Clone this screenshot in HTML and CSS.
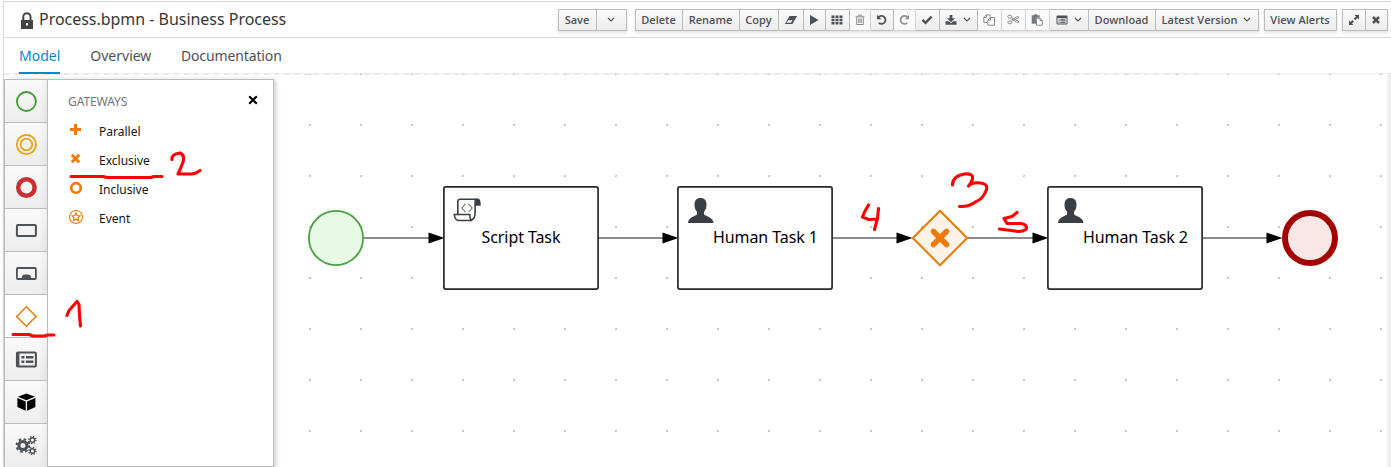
FILE: index.html
```
<!DOCTYPE html>
<html lang="en">
<head>
<meta charset="utf-8">
<title>Process.bpmn - Business Process</title>
<link rel="stylesheet" href="styles.css">
</head>
<body>
<div class="app">
  <header class="titlebar">
    <svg class="lock" width="14" height="18" viewBox="0 0 14 18"><path d="M3.300 8V4.800a3.600 3.600 0 0 1 7.200 0V8" fill="none" stroke="#444" stroke-width="2"/><path fill="#444" fill-rule="evenodd" d="M1 8h12v9H1zM6 11v2.500h2V11z"/></svg>
    <h1 class="title">Process.bpmn - Business Process</h1>
    <div class="toolbar">
      <div class="group">
        <button class="btn w-save">Save</button>
        <button class="btn w-caret"><svg width="8" height="6" viewBox="0 0 8 6"><path class="chev" d="M1 1l3 3 3-3"/></svg></button>
      </div>
      <div class="group main">
        <button class="btn w-delete">Delete</button>
        <button class="btn w-rename">Rename</button>
        <button class="btn w-copy">Copy</button>
        <button class="btn w25"><svg width="14" height="10" viewBox="0 0 14 10"><path fill="#4d5258" fill-rule="evenodd" d="M5.500 1h7.600L8.500 9H.9zM2.500 7.800H7L8.500 5.200H4.200z"/></svg></button>
        <button class="btn w22"><svg width="10" height="10" viewBox="0 0 10 10"><path fill="#4d5258" d="M1 0l8.500 5L1 10z"/></svg></button>
        <button class="btn w24"><svg width="12" height="10" viewBox="0 0 12 10"><path fill="#4d5258" d="M.5 .5h3v2.500h-3zM4.500 .5h3v2.500h-3zM8.500 .5h3v2.500h-3zM.5 3.800h3v2.400h-3zM4.500 3.800h3v2.400h-3zM8.500 3.800h3v2.400h-3zM.5 7h3v2.500h-3zM4.500 7h3v2.500h-3zM8.500 7h3v2.500h-3z"/></svg></button>
        <button class="btn w21 off"><svg width="10" height="12" viewBox="0 0 10 12"><path fill="none" stroke="#8b8d8f" d="M.7 2.800h8.600M3.300 2.500V1.200h3.400v1.300M1.700 3v7.500h6.600V3M3.700 4.500v4.500M5 4.500v4.500M6.300 4.500v4.500"/></svg></button>
        <button class="btn w23"><svg width="12" height="12" viewBox="0 0 12 12"><path fill="none" stroke="#4d5258" stroke-width="1.800" d="M2.200 3.600A4 4 0 1 1 2.800 8.900"/><path fill="#4d5258" d="M1 .8v4.400h4.400z"/></svg></button>
        <button class="btn w22 off"><svg width="12" height="12" viewBox="0 0 12 12"><path fill="none" stroke="#909294" stroke-width="1.800" d="M9.800 3.600A4 4 0 1 0 9.200 8.900"/><path fill="#909294" d="M11 .8v4.400H6.600z"/></svg></button>
        <button class="btn w24"><svg width="12" height="10" viewBox="0 0 12 10"><path fill="none" stroke="#4d5258" stroke-width="2.400" d="M1.500 4.800l3 3L10.600 1.700"/></svg></button>
        <button class="btn w38"><svg width="12" height="12" viewBox="0 0 12 12"><path fill="#4d5258" fill-rule="evenodd" d="M4.600 1h2.800v3.300H10L6 8.300l-4-4h2.600zM.5 7.300h3.300L6 9.300l2.200-2h3.300v3.500H.5z"/></svg><svg width="8" height="6" viewBox="0 0 8 6"><path class="chev" d="M1 1l3 3 3-3"/></svg></button>
        <button class="btn w24 off"><svg width="12" height="12" viewBox="0 0 12 12"><path fill="none" stroke="#8b8d8f" d="M3.500 .8H7v3M3.500.8L.8 3.500V8.500h4M3.500.8v2.700H.8M7.500 3.500h4v7.700H4.800V6.200zM7.500 3.500v2.700H4.800"/></svg></button>
        <button class="btn w24 off"><svg width="13" height="11" viewBox="0 0 13 11"><g fill="none" stroke="#8b8d8f"><ellipse cx="2.800" cy="2.700" rx="2" ry="1.500"/><ellipse cx="2.800" cy="8.300" rx="2" ry="1.500"/><path d="M4.500 3.500l7.500 4.200-1.500.8L4.500 5M4.500 7.500L12 3.300l-1.500-.8-6 3.500"/></g></svg></button>
        <button class="btn w24 off"><svg width="12" height="12" viewBox="0 0 12 12"><path fill="#777b7f" d="M.7 1.200h2.500V.3h3v.9h2.500v2.500H5v6H.7z"/><path fill="#fff" stroke="#888b8e" d="M5.500 4.200H9l2.300 2.300v4.700H5.500zM9 4.200v2.500h2.300"/></svg></button>
        <button class="btn w39"><svg width="12" height="10" viewBox="0 0 12 10"><path fill="#4d5258" fill-rule="evenodd" d="M1.500.5h9a1 1 0 0 1 1 1v7a1 1 0 0 1-1 1h-9a1 1 0 0 1-1-1v-7a1 1 0 0 1 1-1zM1.500 3v5.500h9V3z"/><path stroke="#4d5258" d="M2.500 4.200h1M4.300 4.200h5.200M2.500 5.800h1M4.300 5.800h5.200M2.500 7.400h1M4.300 7.400h5.200"/></svg><svg width="8" height="6" viewBox="0 0 8 6"><path class="chev" d="M1 1l3 3 3-3"/></svg></button>
        <button class="btn w-download">Download</button>
        <button class="btn w-latest">Latest Version<svg width="8" height="6" viewBox="0 0 8 6"><path class="chev" d="M1 1l3 3 3-3"/></svg></button>
      </div>
      <div class="group"><button class="btn w-alerts">View Alerts</button></div>
      <div class="group">
        <button class="btn w23"><svg width="10" height="10" viewBox="0 0 10 10"><path fill="#4d5258" d="M5.500 0H10v4.500L8.500 3 6.300 5.200 4.800 3.700 7 1.500zM0 5.500V10h4.500L3 8.500l2-2L3.500 5l-2 2z"/></svg></button>
        <button class="btn w22"><svg width="8" height="8" viewBox="0 0 8 8"><path stroke="#4d5258" stroke-width="2.500" d="M1 1l6 6M7 1L1 7"/></svg></button>
      </div>
    </div>
  </header>
  <nav class="tabs">
    <a class="tab active">Model</a><a class="tab overview">Overview</a><a class="tab docs">Documentation</a>
  </nav>
  <main class="workspace">
    <aside class="palette">
      <div class="rail">
        <div class="cell"><svg width="22" height="22" viewBox="0 0 22 22"><circle cx="11" cy="11" r="9.500" fill="none" stroke="#3f9c35" stroke-width="1.800"/></svg></div>
        <div class="cell"><svg width="22" height="22" viewBox="0 0 22 22"><g fill="none" stroke="#ec9f08" stroke-width="1.700"><circle cx="11" cy="11" r="9.600"/><circle cx="11" cy="11" r="5.800"/></g></svg></div>
        <div class="cell"><svg width="22" height="22" viewBox="0 0 22 22"><circle cx="11" cy="11" r="8.200" fill="none" stroke="#c9302f" stroke-width="4.500"/></svg></div>
        <div class="cell"><svg width="22" height="22" viewBox="0 0 22 22"><rect x="1.500" y="5.500" width="19" height="11" rx="1" fill="none" stroke="#4d5258" stroke-width="2"/></svg></div>
        <div class="cell"><svg width="22" height="22" viewBox="0 0 22 22"><rect x="1.500" y="5.500" width="19" height="11" rx="1" fill="none" stroke="#4d5258" stroke-width="1.800"/><path fill="#4d5258" d="M6.500 17v-2q0-3 3-3h3q3 0 3 3v2z"/></svg></div>
        <div class="cell selected"><svg width="22" height="22" viewBox="0 0 22 22"><path d="M11 1.300L20.700 11 11 20.700 1.300 11z" fill="none" stroke="#ec7a08" stroke-width="1.500"/></svg></div>
        <div class="cell"><svg width="22" height="22" viewBox="0 0 22 22"><rect x="1.500" y="4" width="19" height="14" rx="1" fill="none" stroke="#4d5258" stroke-width="2"/><path fill="#4d5258" d="M1 4h3v14H1zM6 7.500h3v2.500H6zM10.500 7.500H18V10h-7.500zM6 12h3v2.500H6zM10.500 12H18v2.500h-7.500z"/></svg></div>
        <div class="cell"><svg width="22" height="22" viewBox="0 0 22 22"><path d="M11 2l8.500 3.200L11 8.800 2.500 5.200zM2 6.500l8.300 3.500v9.300L2 15.500zM20 6.500l-8.300 3.500v9.300l8.300-3.800z"/></svg></div>
        <div class="cell"><svg width="22" height="22" viewBox="0 0 22 22"><g fill="none" stroke="#4d5258"><circle cx="7.500" cy="11" r="4" stroke-width="3"/><circle cx="7.500" cy="11" r="6.300" stroke-width="2.200" stroke-dasharray="2.470 2.470"/><circle cx="17" cy="5.500" r="2.300" stroke-width="1.500"/><circle cx="17" cy="5.500" r="3.600" stroke-width="1.300" stroke-dasharray="1.413 1.413"/><circle cx="17" cy="16.500" r="2.300" stroke-width="1.500"/><circle cx="17" cy="16.500" r="3.600" stroke-width="1.300" stroke-dasharray="1.413 1.413"/></g></svg></div>
      </div>
      <section class="drawer">
        <div class="drawer-head"><h2 class="heading">GATEWAYS</h2><svg width="10" height="10" viewBox="0 0 10 10"><path d="M1.200 1.200l7.600 7.600M8.800 1.200L1.200 8.800" stroke="#000" stroke-width="2.100"/></svg></div>
        <ul class="items">
          <li class="item"><svg width="16" height="16" viewBox="0 0 16 16"><path d="M7.500 1v11M2 6.500h11" stroke="#ec7a08" stroke-width="3"/></svg><span>Parallel</span></li>
          <li class="item"><svg width="16" height="16" viewBox="0 0 16 16"><path d="M3.800 2.800l7.400 7.400M11.200 2.800l-7.400 7.400" stroke="#ec7a08" stroke-width="3"/></svg><span>Exclusive</span></li>
          <li class="item"><svg width="16" height="16" viewBox="0 0 16 16"><circle cx="8" cy="7" r="4.800" fill="none" stroke="#ec7a08" stroke-width="2.700"/></svg><span>Inclusive</span></li>
          <li class="item"><svg width="16" height="16" viewBox="0 0 16 16"><circle cx="8" cy="7" r="6.500" fill="none" stroke="#ec7a08" stroke-width="1.100"/><path d="M8 2.900l1.200 2.600 2.900.3-2.100 2 .6 2.900L8 9.300l-2.600 1.400.6-2.900-2.100-2 2.900-.3z" fill="none" stroke="#ec7a08" stroke-width="1.200"/></svg><span>Event</span></li>
        </ul>
      </section>
    </aside>
    <svg class="diagram" width="1113" height="393" viewBox="274 74 1113 393">
      <defs>
        <pattern id="dots" x="309" y="124" width="51" height="51" patternUnits="userSpaceOnUse"><path fill="#d4d4d4" d="M0 0h2v2H0z"/><path fill="#b8b8b8" d="M1 0h1v1H1zM0 1h1v1H0z"/></pattern>
        <g id="arrow"><path d="M0-5.500L16 0 0 5.500z"/></g>
        <g id="person"><path fill="#393f44" d="M12.500 0c4 0 6 2.500 6 6.500 0 3-.8 5.700-2.500 7.200v2.600c1 2 9 2.300 9.500 8.700H0c.5-6.400 8-6.700 9-8.700v-2.600C7.300 12.200 6.500 9.500 6.500 6.500c0-4 2-6.500 6-6.500z"/></g>
      </defs>
      <rect x="274" y="74" width="1113" height="393" fill="url(#dots)"/>
      <g stroke="#666" stroke-width="1.500"><path d="M364 238h66M599 238h66M833 238h66M968 238h66M1203 238h66"/></g>
      <use href="#arrow" x="428.500" y="238"/><use href="#arrow" x="662.500" y="238"/><use href="#arrow" x="896.500" y="238"/><use href="#arrow" x="1032.500" y="238"/><use href="#arrow" x="1266.500" y="238"/>
      <circle cx="336" cy="238" r="27.100" fill="#e8fae6" stroke="#4aa241" stroke-width="1.800"/>
      <g fill="#fff" stroke="#292929" stroke-width="1.700"><rect x="443.900" y="186.900" width="154.200" height="102.200" rx="2"/><rect x="677.900" y="186.900" width="154.200" height="102.200" rx="2"/><rect x="1047.900" y="186.900" width="154.200" height="102.200" rx="2"/></g>
      <g fill="none" stroke="#393f44" stroke-width="1.600"><path d="M457.800 214V201.500q0-2.200 2.500-2.200h17q-2.200 0-2.200 2.800v11q0 7-5.600 7.300"/><path d="M454.300 214.500h15.500q0 5.500 2.500 6h-14q-3.500-.5-4-6z"/></g>
      <path fill="#393f44" d="M476 198.500h2q3 .3 2.700 7.200h-5.500z"/>
      <path fill="none" stroke="#393f44" d="M465.500 203.800l-3.800 4.200 3.800 4.200M468.500 203.800l3.800 4.200-3.800 4.200"/>
      <use href="#person" x="688" y="198"/><use href="#person" x="1058" y="198"/>
      <g class="task-label"><text x="481.500" y="243" textLength="79">Script Task</text><text x="713" y="243" textLength="105">Human Task 1</text><text x="1083" y="243" textLength="105">Human Task 2</text></g>
      <path d="M940 210.800l27.200 27.200-27.200 27.200-27.200-27.200z" fill="#fdf2e8" stroke="#ec7a08" stroke-width="2" stroke-linejoin="round"/>
      <path d="M933.500 231.500l13 13M946.500 231.500l-13 13" stroke="#ec7a08" stroke-width="5.500" stroke-linecap="round"/>
      <circle cx="1310" cy="238" r="25" fill="#fae6e6" stroke="#a30000" stroke-width="6"/>
    </svg>
  </main>
</div>
<svg class="markup" width="1391" height="467" viewBox="0 0 1391 467">
  <path d="M13 334.500h16l4 1.500h11l4-1H54M67 315.500l2-5 8-9 2 3 .5 11 1 10.500M71 176.500h32l4 1h44l3-1h8M172 159.500q-1-5 8-6.500 5 2 3 9-2 6-5 12h14l4-1 4-2.500M868.500 205l-4 7-2 5 6 2.500 9-.5M878.500 208.500l-1 10-3 11M952.500 185q0-9 12-11 9-1 8 5-1 4-4 7 3-4 12-3 9 1 5 9-3 7-10 10-7 5-16 4.500M1017 212.500l-5 4-8 2 3 5h14q7 1 5 6-5 3-11 1.500l-15.500-2"/>
</svg>
</body>
</html>
```
FILE: styles.css
```
* { box-sizing: border-box; }
body { margin: 0; background: #fff; font-family: "Noto Sans", "Open Sans", sans-serif; color: #363636; }
.app { width: 1391px; height: 467px; display: flex; flex-direction: column; padding-top: 1px; overflow: hidden; }
.titlebar { height: 37px; margin-left: 3px; border: 1px solid #d8d8d8; border-width: 1px 0 1px 1px; display: flex; align-items: flex-start; padding: 0 3px 0 16px; }
.lock { margin-top: 10px; }
.title { margin: 5px 0 0 5px; font-size: 16px; line-height: 24px; font-weight: 400; letter-spacing: -0.03px; white-space: nowrap; }
.toolbar { margin: 7px 0 0 auto; display: flex; gap: 5px; }
.group { display: flex; height: 22px; border-left: 1px solid #bbb; box-shadow: 0 2px 3px rgba(0,0,0,.12); }
.main { margin-left: 3px; }
.btn { height: 22px; padding: 0 1px 1px 0; border: 1px solid #bbb; border-left: 0; background: linear-gradient(#fafafa, #ededed); color: #4d5258; font: 600 12px "Noto Sans", "Open Sans", sans-serif; font-family: "Open Sans", sans-serif; font-size: 11px; letter-spacing: 0.02px; display: flex; align-items: center; justify-content: center; gap: 6px; white-space: nowrap; }
.off { background: #fafafa; border-color: #d3d3d3; }
.chev { fill: none; stroke: #4d5258; stroke-width: 1.1; }
.w-save { width: 38px; } .w-caret { width: 30px; } .w-delete { width: 47px; } .w-rename { width: 57px; } .w-copy { width: 39px; }
.w21 { width: 21px; } .w22 { width: 22px; } .w23 { width: 23px; } .w24 { width: 24px; } .w25 { width: 25px; } .w38 { width: 38px; } .w39 { width: 39px; }
.w-download { width: 67px; } .w-latest { width: 103px; } .w-alerts { width: 72px; }
.tabs { height: 36px; margin-left: 3px; border-left: 1px solid #d8d8d8; border-bottom: 1px solid #ececec; padding-left: 15px; display: flex; gap: 30px; }
.tab { height: 36px; font-size: 14px; line-height: 36px; color: #4d5258; }
.docs { letter-spacing: -0.12px; margin-left: -0.5px; }
.active { color: #0088ce; border-bottom: 2px solid #0088ce; }
.workspace { height: 393px; margin-left: 3px; border-left: 1px solid #d8d8d8; border-right: 4px solid #f0f0f0; display: flex; background: repeating-linear-gradient(90deg, #e8e8e8 0 5px, transparent 5px 10px) 0 0 / 1195px 1px no-repeat; }
.palette { width: 270px; height: 388px; margin-top: 5px; border: 1px solid #bbb; display: flex; flex-shrink: 0; background: #fff; box-shadow: 2px 1px 5px rgba(0,0,0,.2); }
.rail { width: 43px; border-right: 1px solid #bbb; }
.cell { height: 43px; display: flex; align-items: center; justify-content: center; border-bottom: 1px solid #bbb; background: linear-gradient(90deg, transparent 80%, rgba(0,0,0,.045)), linear-gradient(#fafafa, #ededed); }
.cell svg { transform: translate(0.4px, 0.5px); }
.cell:last-child { border-bottom: 0; padding-bottom: 1px; }
.selected { background: #fff; }
.drawer { flex: 1; padding: 10px 15px 0 20px; }
.drawer-head { display: flex; justify-content: space-between; align-items: center; height: 20px; }
.heading { margin: 4px 0 0; font-size: 12px; font-weight: 400; line-height: 18px; letter-spacing: -0.08px; color: #72767b; }
.items { list-style: none; margin: 7px 0 0; padding: 0; }
.item { height: 29px; display: flex; align-items: flex-start; gap: 15px; font-size: 12px; line-height: 18px; color: #151515; padding-top: 6px; }
.item svg { display: block; }
.diagram { display: block; flex-shrink: 0; }
.task-label { font: 16px "Noto Sans", sans-serif; fill: #000; }
.markup { position: absolute; left: 0; top: 0; pointer-events: none; fill: none; stroke: #f00; stroke-width: 3.1; stroke-linecap: round; stroke-linejoin: round; }
```
